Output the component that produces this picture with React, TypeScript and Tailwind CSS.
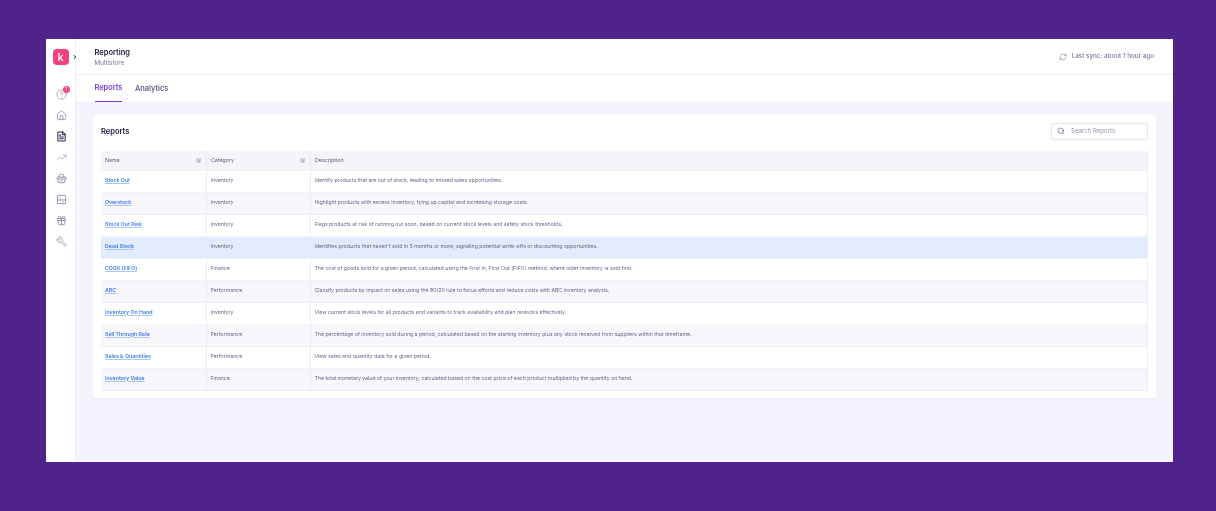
import { ChevronRight, CircleHelp, House, FileText, TrendingUp, Gift, Wrench, RefreshCw, Search, ListFilter } from 'lucide-react';

const reports = [
  { name: 'Stock Out', category: 'Inventory', description: 'Identify products that are out of stock, leading to missed sales opportunities.' },
  { name: 'Overstock', category: 'Inventory', description: 'Highlight products with excess inventory, tying up capital and increasing storage costs.' },
  { name: 'Stock Out Risk', category: 'Inventory', description: 'Flags products at risk of running out soon, based on current stock levels and safety stock thresholds.' },
  { name: 'Dead Stock', category: 'Inventory', description: "Identifies products that haven't sold in 3 months or more, signaling potential write-offs or discounting opportunities." },
  { name: 'COGS (FIFO)', category: 'Finance', description: 'The cost of goods sold for a given period, calculated using the First In, First Out (FIFO) method, where older inventory is sold first.' },
  { name: 'ABC', category: 'Performance', description: 'Classify products by impact on sales using the 80/20 rule to focus efforts and reduce costs with ABC inventory analysis.' },
  { name: 'Inventory On Hand', category: 'Inventory', description: 'View current stock levels for all products and variants to track availability and plan restocks effectively.' },
  { name: 'Sell Through Rate', category: 'Performance', description: 'The percentage of inventory sold during a period, calculated based on the starting inventory plus any stock received from suppliers within that timeframe.' },
  { name: 'Sales & Quantities', category: 'Performance', description: 'View sales and quantity data for a given period.' },
  { name: 'Inventory Value', category: 'Finance', description: 'The total monetary value of your inventory, calculated based on the cost price of each product multiplied by the quantity on hand.' },
];

function BasketIcon() {
  return (
    <svg width="11" height="11" viewBox="0 0 24 24" fill="none" stroke="currentColor" strokeWidth="2" className="text-[#8d89a8]">
      <path d="M7 9V6a3 3 0 0 1 3-3h4a3 3 0 0 1 3 3v3" />
      <rect x="2" y="9" width="20" height="4" rx="1" />
      <path d="M4 13l1.5 8h13l1.5-8" />
      <path d="M10 17h4" />
    </svg>
  );
}

function PanelIcon() {
  return (
    <svg width="11" height="11" viewBox="0 0 24 24" fill="none" stroke="currentColor" strokeWidth="2" className="text-[#8d89a8]">
      <rect x="3" y="3" width="18" height="18" rx="1.5" />
      <path d="M3 13h18" />
      <path d="M7 8h3" />
      <path d="M15 17h2" />
    </svg>
  );
}

function Sidebar() {
  return (
    <aside className="w-[30px] shrink-0 border-r border-[#eeecf6] flex flex-col items-center">
      <div className="relative mt-[10px] w-full flex justify-center">
        <div className="w-4 h-4 rounded-[4px] bg-[#f5417f] flex items-center justify-center text-white text-[11px] font-medium leading-none">k</div>
        <ChevronRight size={6} strokeWidth={4} className="absolute right-[-3px] top-[5px] text-[#1c1640]" />
      </div>
      <div className="relative mt-[24px] ml-[1px]">
        <CircleHelp size={11} strokeWidth={1.5} className="text-[#8d89a8]" />
        <span className="absolute top-[-3px] right-[-3px] w-[7px] h-[7px] rounded-full bg-[#f5417f] text-white text-[4.5px] leading-[7px] text-center">1</span>
      </div>
      <div className="mt-[10px] ml-[1px] flex flex-col items-center gap-[10px]">
        <House size={11} strokeWidth={1.75} className="text-[#8d89a8]" />
        <FileText size={11} strokeWidth={2.25} className="text-[#2a2352]" />
        <TrendingUp size={11} strokeWidth={1.75} className="text-[#a5a2bb]" />
        <BasketIcon />
        <PanelIcon />
        <Gift size={11} strokeWidth={2} className="text-[#8d89a8]" />
        <Wrench size={11} strokeWidth={1.75} className="text-[#8d89a8] -scale-x-100" />
      </div>
    </aside>
  );
}

function Th({ label, filter, className }: { label: string; filter?: boolean; className: string }) {
  return (
    <div className={`${className} h-full flex items-center justify-between pl-[4px] pr-[5px] text-[5.3px] text-[#5f5b7c]`}>
      <span>{label}</span>
      {filter && (
        <span className="w-[5px] h-[5px] rounded-[1px] bg-[#dcdae6] flex items-center justify-center">
          <ListFilter size={4} strokeWidth={2} className="text-[#6c6888]" />
        </span>
      )}
    </div>
  );
}

export default function App() {
  return (
    <div className="w-[1216px] h-[511px] bg-[#4f2389] pt-[39px] pl-[46px] overflow-hidden font-['Inter',sans-serif]">
      <div className="w-[1127px] h-[423px] bg-white flex blur-[0.3px]">
        <Sidebar />
        <main className="flex-1 flex flex-col min-w-0">
          <header className="h-[36px] border-b border-[#eeedf5] pl-[18.5px] pr-[19px] flex items-center justify-between">
            <div className="pt-[1px]">
              <div className="text-[7.5px] leading-[11px] font-semibold text-[#1c1640]">Reporting</div>
              <div className="text-[6.3px] leading-[10px] text-[#77738f]">Multistore</div>
            </div>
            <div className="flex items-center gap-[5px] text-[6.3px] font-medium text-[#7c7896]">
              <RefreshCw size={8} strokeWidth={1.5} className="text-[#6f6b8b]" />
              <span>Last sync: about 1 hour ago</span>
            </div>
          </header>
          <nav className="h-[28px] pl-[18.5px] flex gap-[12.5px] text-[7.4px] font-semibold border-b border-[#f0eff7]">
            <div className="h-full flex items-center border-b-[1.5px] border-[#7c3bdc] text-[#7c3bdc]">Reports</div>
            <div className="h-full flex items-center text-[#67628a]">Analytics</div>
          </nav>
          <div className="flex-1 bg-[#f5f4fc] pl-[17px] pr-[17px] pt-[12px]">
            <section className="h-[283px] bg-white rounded-[3px] shadow-[0_1px_2px_rgba(60,50,120,0.06)] pl-2 pr-2 flex flex-col">
              <div className="h-[36px] pb-[4px] flex items-center justify-between">
                <h2 className="text-[7.5px] font-semibold text-[#1c1640] mt-[1px]">Reports</h2>
                <div className="w-[97px] h-[17px] border border-[#e6e4ef] rounded-[2px] flex items-center pl-[5px] gap-[6px] text-[6.1px] text-[#9794ad]">
                  <Search size={8} strokeWidth={1.75} className="text-[#4f4b6c]" />
                  <span>Search Reports</span>
                </div>
              </div>
              <div className="border-b border-r border-[#eeedf5]">
                <div className="h-[19px] flex items-center bg-[#f5f4f9]">
                  <Th label="Name" filter className="w-[105px]" />
                  <Th label="Category" filter className="w-[104px] border-l border-[#ecebf3]" />
                  <Th label="Description" className="flex-1 border-l border-[#ecebf3]" />
                </div>
                {reports.map((r, i) => (
                  <div
                    key={r.name}
                    className={`h-[22px] flex items-center text-[5.2px] text-[#6a6788] border-t border-[#f1f0f7] ${i === 3 ? 'bg-[#e2ebfb]' : i % 2 === 1 ? 'bg-[#f7f6fb]' : 'bg-white'}`}
                  >
                    <div className="w-[105px] h-full flex items-center pl-[4px] pb-[2px]">
                      <a href="#" className="text-[5.25px] font-semibold text-[#3b7ef0] underline decoration-[#a9c8fa]">{r.name}</a>
                    </div>
                    <div className="w-[104px] h-full flex items-center pl-[3.5px] pb-[2px] border-l border-[#ecebf3]">{r.category}</div>
                    <div className="flex-1 h-full flex items-center pl-[3.5px] pb-[2px] border-l border-[#ecebf3] whitespace-nowrap">{r.description}</div>
                  </div>
                ))}
              </div>
            </section>
          </div>
        </main>
      </div>
    </div>
  );
}
